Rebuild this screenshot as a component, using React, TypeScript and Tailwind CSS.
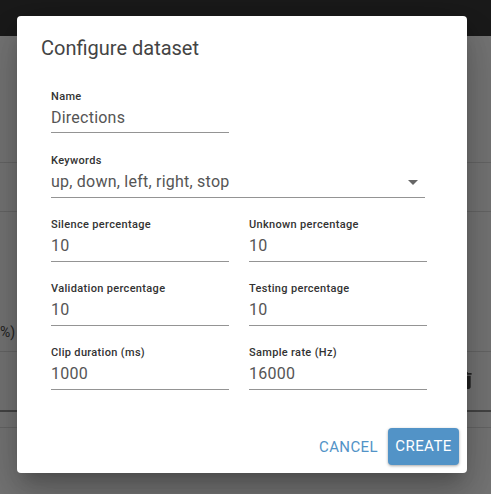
const bodyFont = "font-['Roboto','Liberation_Sans',sans-serif]";

function Field({ label, value, className, short }: { label: string; value: string; className: string; short?: boolean }) {
  return (
    <div className={`flex flex-col ${short ? "pt-px" : ""} ${className}`}>
      <label className="h-4 text-[11px] leading-[13px] font-medium tracking-[0.33px] text-[#333]">{label}</label>
      <div className={`${short ? "h-[27px]" : "h-7"} text-base leading-[23px] tracking-[0.23px] text-[#555] border-b border-[#949494]`}>{value}</div>
    </div>
  );
}

export default function App() {
  return (
    <div className={`relative h-[494px] w-[491px] overflow-hidden bg-[#757575] ${bodyFont}`}>
      {/* page behind the dialog */}
      <div className="h-9 bg-[#1a1a1a]" />
      <div className="h-[127px] border-b border-[#666]" />
      <div className="h-[49px] border-b border-[#666]" />
      <div className="h-[100px]" />
      <div className="h-[40px] pt-[10px] border-b border-[#666] text-[14px] text-[#222]">%)</div>
      <div className="h-[60px] border-b-2 border-[#444]" />
      <div className="h-[16px] border-b border-[#666]" />
      <svg className="absolute left-[458px] top-[372px] w-[14px] h-[17px]" viewBox="0 0 14 18" fill="#222">
        <path d="M1 16c0 1.100.9 2 2 2h8c1.100 0 2-.9 2-2V4H1zM14 1h-3.500l-1-1h-5l-1 1H0v2h14z" />
      </svg>

      {/* dialog */}
      <div className="absolute left-[17px] top-[16px] flex h-[457px] w-[450px] flex-col rounded bg-white shadow-[0_11px_15px_-7px_rgba(0,0,0,0.2),0_24px_38px_3px_rgba(0,0,0,0.14),0_9px_46px_8px_rgba(0,0,0,0.12)]">
        <h2 className="pl-6 pt-[19px] text-xl leading-[26px] text-[#444]">Configure dataset</h2>
        <div className="mt-7 flex flex-col pl-[34px]">
          <Field label="Name" value="Directions" className="w-[178px]" short />
          <div className="relative mt-[21px] flex flex-col">
            <Field label="Keywords" value="up, down, left, right, stop" className="w-[374px]" />
            <div className="absolute left-[357px] top-[26px] h-0 w-0 border-x-[5px] border-t-[5px] border-x-transparent border-t-[#666]" />
          </div>
          <div className="mt-5 grid grid-cols-[178px_178px] gap-x-5 gap-y-5">
            <Field label="Silence percentage" value="10" className="" />
            <Field label="Unknown percentage" value="10" className="" />
            <Field label="Validation percentage" value="10" className="" />
            <Field label="Testing percentage" value="10" className="" />
            <Field label="Clip duration (ms)" value="1000" className="" />
            <Field label="Sample rate (Hz)" value="16000" className="" />
          </div>
        </div>
        <div className="mt-auto flex items-center justify-end gap-[2px] pb-2 pr-2">
          <button className="px-2 py-1.5 text-[15px] leading-6 tracking-[0.4px] text-[#5293c7]">CANCEL</button>
          <button className="h-[37px] w-[71px] rounded bg-[#5293c7] text-[15px] tracking-[0.45px] text-white shadow-[0_1px_3px_rgba(0,0,0,0.35)]">CREATE</button>
        </div>
      </div>
    </div>
  );
}
